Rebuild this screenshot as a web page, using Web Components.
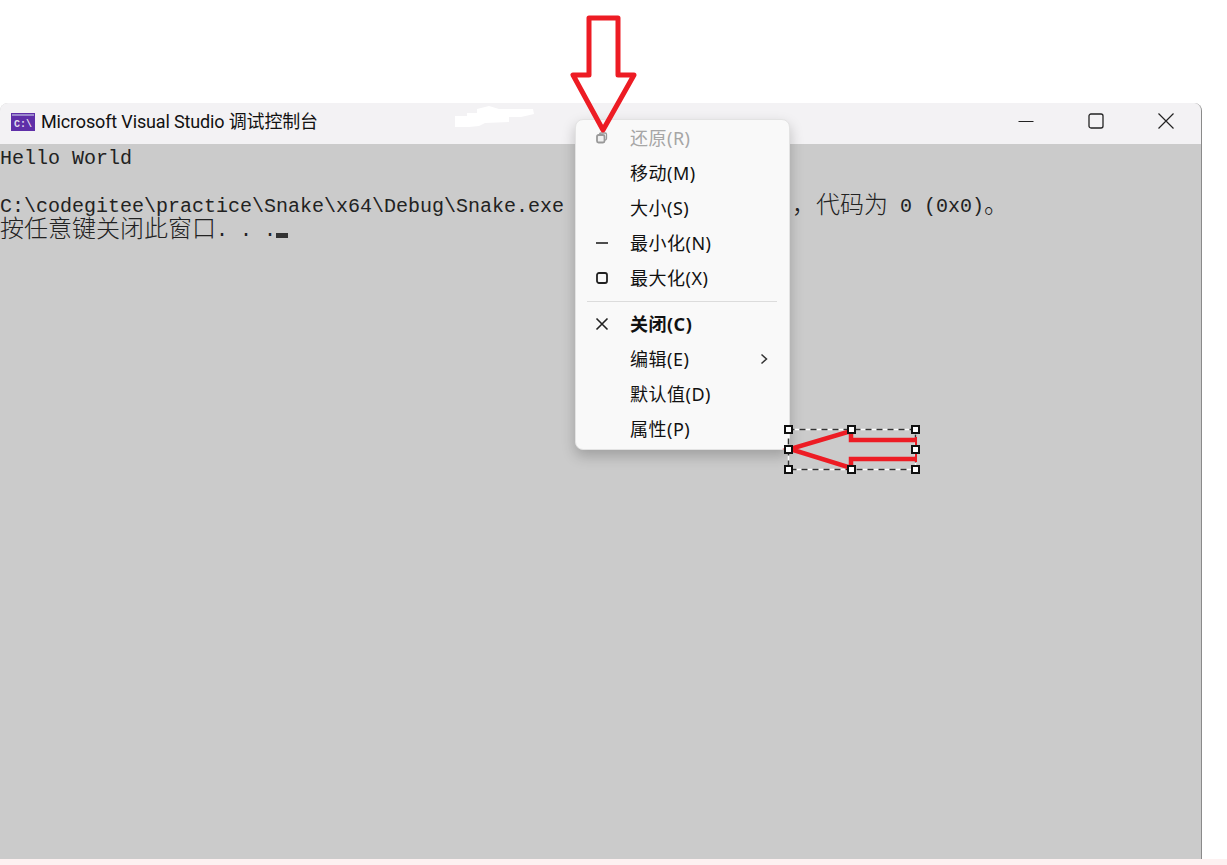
<!DOCTYPE html>
<html lang="zh">
<head>
<meta charset="utf-8">
<title>Microsoft Visual Studio 调试控制台</title>
<style>
html, body { margin: 0; background: #fff; }
body { width: 1227px; height: 865px; overflow: hidden; display: flex; flex-direction: column; position: relative; }
</style>
</head>
<body>
<console-window>
  <title-bar>Microsoft Visual Studio 调试控制台</title-bar>
  <console-text></console-text>
</console-window>
<bottom-strip></bottom-strip>
<sys-menu>
  <menu-item icon="restore" disabled>还原(R)</menu-item>
  <menu-item>移动(M)</menu-item>
  <menu-item>大小(S)</menu-item>
  <menu-item icon="min">最小化(N)</menu-item>
  <menu-item icon="max">最大化(X)</menu-item>
  <menu-sep></menu-sep>
  <menu-item icon="close" bold>关闭(C)</menu-item>
  <menu-item more>编辑(E)</menu-item>
  <menu-item>默认值(D)</menu-item>
  <menu-item>属性(P)</menu-item>
</sys-menu>
<markup-layer></markup-layer>

<script>
// main window, the spacer above it is just margin
class ConsoleWindow extends HTMLElement {
  constructor() {
    super();
    this.attachShadow({ mode: "open" });
    this.shadowRoot.innerHTML = `
    <style>
    :host { display: flex; flex-direction: column; flex: none; width: 1202px; height: 756px; margin-top: 103px;
      border-radius: 8px 8px 0 0; overflow: hidden; background: #cbcbcb; box-sizing: border-box; border-right: 1px solid #8a8a8a; }
    </style>
    <slot></slot>`;
  }
}
customElements.define("console-window", ConsoleWindow);

class TitleBar extends HTMLElement {
  constructor() {
    super();
    this.attachShadow({ mode: "open" });
    this.shadowRoot.innerHTML = `
    <style>
    :host { display: flex; align-items: center; flex: none; height: 41px; background: #f3f2f4; padding-left: 11px;
      font: 18px Roboto, "Noto Sans CJK SC", sans-serif; color: #111; position: relative; }
    .app { flex: none; margin-right: 6px; margin-top: -4px; display: block; }
    .app text { font: bold 10px "Liberation Mono", monospace; fill: #e2deee; }
    .title { flex: 1; white-space: nowrap; margin-top: -7px; letter-spacing: -0.15px; }
    .blot { position: absolute; left: 455px; top: 2px; }
    .ctrl { display: flex; flex: none; margin-right: 27px; margin-top: -5px; gap: 54px; }
    .ctrl svg { display: block; }
    </style>
    <svg class="app" width="24" height="18" viewBox="0 0 24 18">
      <rect width="24" height="18" fill="#5f2fa8"/>
      <rect x="1" y="1" width="22" height="2" fill="#9a88cc"/>
      <text x="3" y="14">C:\\</text>
    </svg>
    <span class="title"><slot></slot></span>
    <svg class="blot" width="80" height="24" viewBox="0 0 80 24"><path d="M0 11H12V8H22V4L34 1 44 4H78L79 9 66 12H54V17L30 18 24 21 14 22H0Z" fill="#fff"/></svg>
    <div class="ctrl">
      <svg width="16" height="16" viewBox="0 0 16 16"><path d="M0.5 8.5H15.5" stroke="#222" stroke-width="1" fill="none"/></svg>
      <svg width="16" height="16" viewBox="0 0 16 16"><rect x="1" y="1" width="14" height="14" rx="2" stroke="#222" stroke-width="1.3" fill="none"/></svg>
      <svg width="16" height="16" viewBox="0 0 16 16"><path d="M0.5 0.5L15.5 15.5M15.5 0.5L0.5 15.5" stroke="#222" stroke-width="1.2" fill="none"/></svg>
    </div>`;
  }
}
customElements.define("title-bar", TitleBar);

class ConsoleText extends HTMLElement {
  constructor() {
    super();
    this.attachShadow({ mode: "open" });
    this.shadowRoot.innerHTML = `
    <style>
    :host { display: block; flex: 1; padding-top: 3px; color: #222; font: 20px/24px "Liberation Mono", monospace; }
    div { height: 24px; white-space: pre; }
    .cjk { font: 300 24px/0 "Noto Sans CJK SC", sans-serif; vertical-align: -1px; }
    .gap { display: inline-block; width: 228px; height: 1px; }
    .cursor { display: inline-block; width: 12px; height: 5px; background: #333; vertical-align: -2px; }
    </style>
    <div>Hello World</div>
    <div></div>
    <div>C:\\codegitee\\practice\\Snake\\x64\\Debug\\Snake.exe<span class="gap"></span><span class="cjk">，代码为</span> 0 (0x0)<span class="cjk">。</span></div>
    <div><span class="cjk">按任意键关闭此窗口</span>. . .<span class="cursor"></span></div>`;
  }
}
customElements.define("console-text", ConsoleText);

class BottomStrip extends HTMLElement {
  constructor() {
    super();
    this.attachShadow({ mode: "open" });
    this.shadowRoot.innerHTML = `<style>:host { display: block; flex: none; height: 6px; background: #fdf1f1; }</style>`;
  }
}
customElements.define("bottom-strip", BottomStrip);

// popup over the console, so absolute is fine here
class SysMenu extends HTMLElement {
  constructor() {
    super();
    this.attachShadow({ mode: "open" });
    this.shadowRoot.innerHTML = `
    <style>
    :host { display: flex; flex-direction: column; position: absolute; left: 575px; top: 119px; width: 215px; height: 331px;
      box-sizing: border-box; padding: 0; background: #f9f9f9; border: 1px solid #e3e3e3; border-radius: 8px;
      box-shadow: 0 6px 14px rgba(0,0,0,.22); font: 18px "Noto Sans", "Noto Sans CJK SC", sans-serif; color: #111; letter-spacing: .5px; }
    </style>
    <slot></slot>`;
  }
}
customElements.define("sys-menu", SysMenu);

const ICONS = {
  restore: `<rect x="4.5" y="2" width="7" height="7" rx="1.5" fill="none" stroke="#999" stroke-width="1.3"/><rect x="2" y="4" width="7.5" height="7.5" rx="1.5" fill="#f0f0f0" stroke="#999" stroke-width="1.8"/>`,
  min: `<path d="M1 7H13" stroke="#222" stroke-width="1.6" fill="none"/>`,
  max: `<rect x="2" y="2" width="10" height="10" rx="2" stroke="#222" stroke-width="1.8" fill="none"/>`,
  close: `<path d="M1.5 1.5L12.5 12.5M12.5 1.5L1.5 12.5" stroke="#222" stroke-width="1.6" fill="none"/>`
};

class MenuItem extends HTMLElement {
  constructor() {
    super();
    this.attachShadow({ mode: "open" });
    const icon = ICONS[this.getAttribute("icon")] || "";
    this.shadowRoot.innerHTML = `
    <style>
    :host { display: flex; align-items: center; flex: none; height: 35px; padding-left: 19px; padding-right: 20px; }
    :host([disabled]) { color: #a6a6a6; }
    :host([bold]) { font-weight: 700; }
    svg { flex: none; display: block; }
    .label { flex: 1; margin-left: 21px; margin-top: -1px; white-space: nowrap; }
    .more { display: none; }
    :host([more]) .more { display: block; }
    </style>
    <svg width="14" height="14" viewBox="0 0 14 14">${icon}</svg>
    <span class="label"><slot></slot></span>
    <svg class="more" width="10" height="12" viewBox="0 0 10 12"><path d="M2.5 1.5L7.5 6 2.5 10.5" stroke="#333" stroke-width="1.5" fill="none"/></svg>`;
  }
}
customElements.define("menu-item", MenuItem);

class MenuSep extends HTMLElement {
  constructor() {
    super();
    this.attachShadow({ mode: "open" });
    this.shadowRoot.innerHTML = `<style>:host { display: block; flex: none; height: 1px; margin: 6px 12px 4px 11px; background: #dcdcdc; }</style>`;
  }
}
customElements.define("menu-sep", MenuSep);

// red annotation arrows drawn on top of the screenshot
class MarkupLayer extends HTMLElement {
  constructor() {
    super();
    this.attachShadow({ mode: "open" });
    const handles = [[788,429],[851,429],[915,429],[788,449],[915,449],[788,469],[851,469],[915,469]]
      .map(([x, y]) => `<rect x="${x - 3}" y="${y - 3}" width="7" height="7" fill="#fff" stroke="#111" stroke-width="2"/>`).join("");
    this.shadowRoot.innerHTML = `
    <style>
    :host { display: block; position: absolute; left: 0; top: 0; width: 1227px; height: 865px; pointer-events: none; }
    svg { display: block; }
    </style>
    <svg width="1227" height="865" viewBox="0 0 1227 865">
      <polygon points="589,18 618,18 618,75 634,75 603,130 573,75 589,75" fill="none" stroke="#ed1c24" stroke-width="5" stroke-linejoin="round"/>
      <rect x="788.5" y="429.5" width="127" height="40" fill="none" stroke="#fff" stroke-width="1.5"/>
      <rect x="788.5" y="429.5" width="127" height="40" fill="none" stroke="#333" stroke-width="1.5" stroke-dasharray="6 5"/>
      <path d="M916 440H851V431L790 449 851 468V459H916" fill="none" stroke="#ed1c24" stroke-width="4.5"/>
      <path d="M916 437V462" fill="none" stroke="#ed1c24" stroke-width="2"/>
      ${handles}
    </svg>`;
  }
}
customElements.define("markup-layer", MarkupLayer);
</script>
</body>
</html>
